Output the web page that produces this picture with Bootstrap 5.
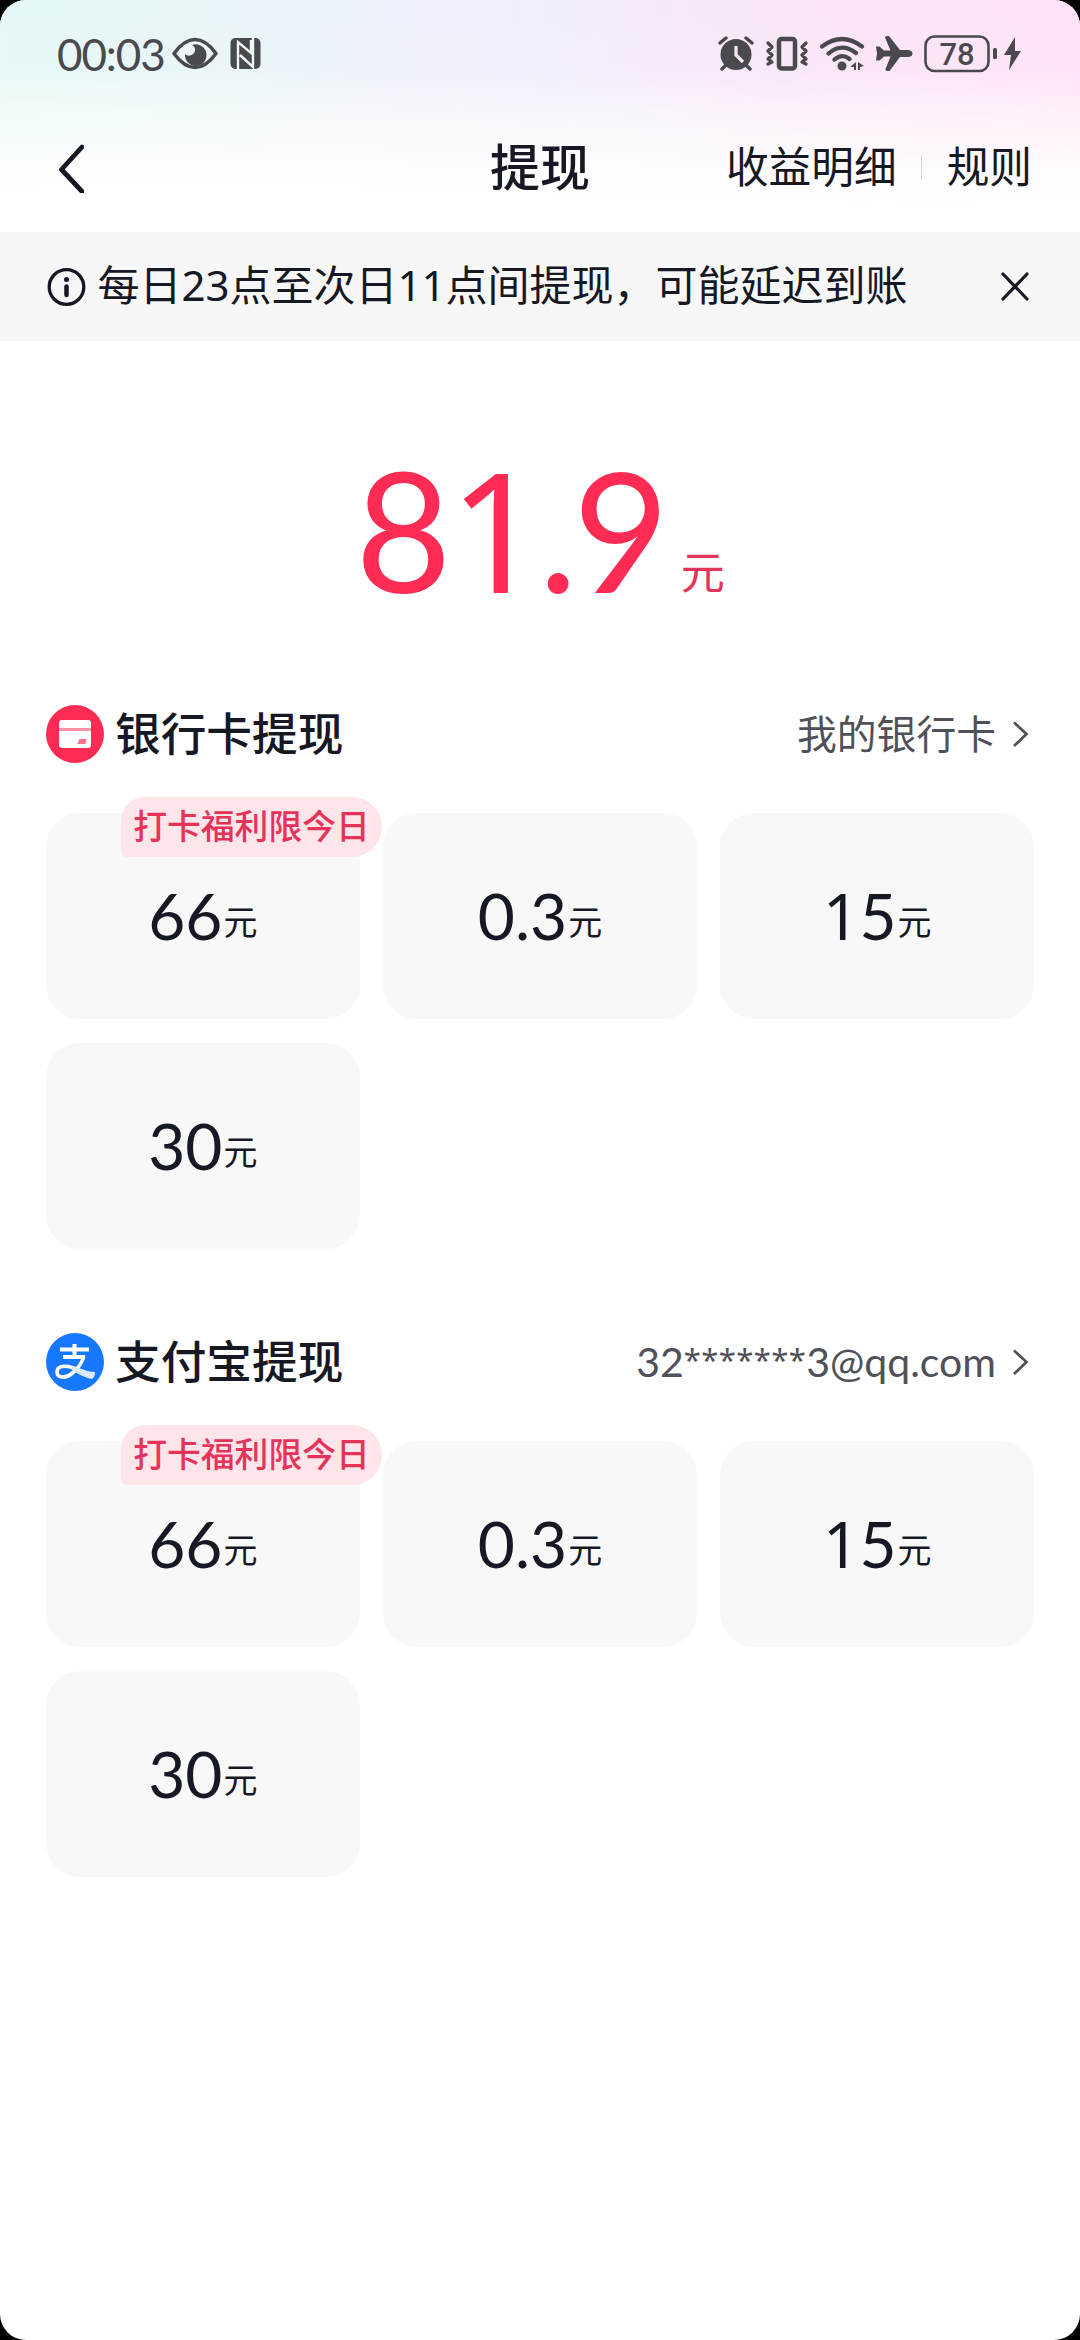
<!DOCTYPE html>
<html lang="zh-CN">
<head>
<meta charset="utf-8">
<meta name="viewport" content="width=device-width, initial-scale=1">
<title>提现</title>
<link href="https://cdn.jsdelivr.net/npm/bootstrap@5.3.0/dist/css/bootstrap.min.css" rel="stylesheet">
<style>
body{background:#000;font-family:Lato,"Noto Sans CJK SC",sans-serif;color:#161823;line-height:1}
svg{display:block;flex:none}
.screen{height:2340px;border-radius:26px;background:#fff}
.top-zone{height:232px;background:linear-gradient(180deg,rgba(255,255,255,0) 0,rgba(255,255,255,.08) 70px,rgba(255,255,255,.5) 115px,rgba(255,255,255,.88) 170px,#fff 220px),linear-gradient(90deg,#e5f8f7 0,#e9f5f8 22%,#f1eefa 48%,#f9e6f8 72%,#ffe1f6 100%)}
.status-bar{height:108px;padding:0 57px;color:#4a4a4e}
.clock{font-size:44px;letter-spacing:-1.1px;width:115px;white-space:nowrap}
.nfc{margin-left:12px}
.title-bar{height:122px;padding:0 48px 3px 48px}
.side{flex:1 1 0}
.back-icon{margin-left:10px}
.page-title{font-size:50px;font-weight:500;padding-bottom:2px}
.nav-text{font-size:42.7px}
.divider{width:1px;height:24px;margin:0 25px 0 24px;background:#d5d0d6}
.notice{height:109px;padding:0 50px 0 46.5px;background:linear-gradient(180deg,#f5f6f7,#f7f7f8 50%)}
.notice-text{font-family:"Noto Sans","Noto Sans CJK SC",sans-serif;font-size:42px;margin-left:12px;padding-bottom:3px;white-space:nowrap}
.amount{height:339px;color:#fe2c55;padding-top:105px}
.amount-num{font-size:166px;line-height:166px;letter-spacing:-4.5px}
.amount-unit{font-size:44px;color:#e33459;margin-left:16px;vertical-align:4px}
.plain-one{font-family:"Noto Sans",sans-serif;line-height:1}
.amount-num .plain-one{margin:0 -1px 0 2px}
.pay-section{padding:0 46px;margin-bottom:59px}
.pay-head{height:108px;margin-bottom:25px}
.pay-title{font-size:45.7px;font-weight:500;margin-left:11px}
.pay-link{font-size:39.8px;color:#505158}
.pay-link svg{margin:0 4px 0 16px}
.mail{font-size:41px;padding-bottom:2px}
.masked{font-family:"Noto Sans",sans-serif;font-size:31px;line-height:1;letter-spacing:.4px;vertical-align:6px}
.amount-grid{--bs-gutter-x:23.5px;--bs-gutter-y:24px}
.tile{height:206px;border-radius:34px;background:#f8f8f8}
.tile-num{font-size:64px}
.tile-unit{font-size:34px;margin-left:1px;vertical-align:5px}
.promo{position:absolute;left:75px;top:-16px;width:261px;height:60px;border-radius:24px 30px 30px 6px;background:#fee5ea;color:#e63359;font-size:33.8px;font-weight:500;white-space:nowrap;z-index:1}
</style>
<script src="https://cdn.jsdelivr.net/npm/bootstrap@5.3.0/dist/js/bootstrap.bundle.min.js"></script>
</head>
<body>
<div class="screen overflow-hidden">
  <header class="top-zone">
    <div class="status-bar d-flex align-items-center">
      <span class="clock">00:03</span>
      <svg width="46" height="36" viewBox="172 36 46 36"><path d="M174 53.500Q184 39.500 195 39.500T216 53.500Q206 67.500 195 67.500T174 53.500Z" fill="none" stroke="currentColor" stroke-width="3.500" stroke-linejoin="round"/><path d="M192 45a10.800 10.800 0 1 1-7 9c3 3.500 10 1 10-4 0-2.500-1-4-3-5z" fill="currentColor"/></svg>
      <svg class="nfc" width="32" height="36" viewBox="230 36 32 36"><rect x="230.500" y="38" width="30" height="31" rx="5" fill="currentColor"/><path d="M238 69V42l13 11V40M240 55l13 12V38" fill="none" stroke="#edf8f9" stroke-width="2.400"/></svg>
      <div class="d-flex align-items-center ms-auto">
        <svg width="38" height="36" viewBox="718 36 38 36"><circle cx="736" cy="54.500" r="15.500" fill="currentColor"/><path d="M720 43l6-5M746 38l6 5M726 65l-4 4M746 65l4 4" fill="none" stroke="currentColor" stroke-width="3.500" stroke-linecap="round"/><path d="M736 46v9l7 7" fill="none" stroke="#f8e8f8" stroke-width="3.200"/></svg>
        <svg style="margin-left:9px" width="44" height="36" viewBox="765 36 44 36"><rect x="779" y="39" width="16" height="29.500" rx="2.500" fill="none" stroke="currentColor" stroke-width="4.500"/><path d="M768 43l4 4-4 4 4 4-4 4 4 3-4 2M806 43l-4 4 4 4-4 4 4 4-4 3 4 2" fill="none" stroke="currentColor" stroke-width="3.300" stroke-linejoin="round" stroke-linecap="round"/></svg>
        <svg style="margin-left:10px" width="46" height="36" viewBox="819 36 46 36"><g fill="none" stroke="currentColor" stroke-width="4.200" stroke-linecap="round"><path d="M822 46.500Q842 31.500 862 46.500M828.500 53.500Q842 42 856 53M834.500 59.500Q842 53 849.500 59"/></g><circle cx="842" cy="66" r="4.500" fill="currentColor"/><path d="M856 62v8h-2v-3h-4zM858 62l6 4-4 1v3h-2z" fill="currentColor"/></svg>
        <svg style="margin-left:10px" width="38" height="36" viewBox="875 36 38 36"><path d="M876 46.500h3.500l4.500 4h6.500L885 37.500q0-1.500 2-1.500h2l11 14h8.500q4 .5 4 3.500t-4 3.500H900L889.500 71H887q-2-.500-1.500-2l5-12.500H884l-4.500 4H876l1-7z" fill="currentColor"/></svg>
        <svg style="margin-left:11px" width="76" height="38" viewBox="924 35 76 38"><rect x="925.500" y="36.500" width="63" height="34.500" rx="9" fill="none" stroke="currentColor" stroke-width="2.600"/><rect x="993" y="48" width="4" height="11" rx="1.500" fill="currentColor"/><text x="957" y="64.500" text-anchor="middle" font-family="Roboto" font-weight="500" font-size="31" fill="currentColor">78</text></svg>
        <svg style="margin-left:3px" width="20" height="36" viewBox="1003 36 20 36"><path d="M1015 37l-11 18h7l-2 15 12-19h-6z" fill="currentColor"/></svg>
      </div>
    </div>
    <nav class="title-bar d-flex align-items-center">
      <div class="side"><svg class="back-icon" width="26" height="50" viewBox="58 143 26 50"><path d="M82 147L61.500 169.500 82 191.500" fill="none" stroke="#161823" stroke-width="4.800" stroke-linecap="round" stroke-linejoin="round"/></svg></div>
      <span class="page-title">提现</span>
      <div class="side d-flex justify-content-end align-items-center nav-text"><span>收益明细</span><span class="divider"></span><span>规则</span></div>
    </nav>
  </header>
  <div class="notice d-flex align-items-center">
    <svg width="39" height="38" viewBox="44 267 39 38"><circle cx="63.500" cy="286" r="17.300" fill="none" stroke="#161823" stroke-width="3.300"/><circle cx="63.500" cy="278.500" r="2.500" fill="#161823"/><path d="M63.500 285.500v8.500" stroke="#161823" stroke-width="4.500" stroke-linecap="round"/></svg>
    <span class="notice-text">每日23点至次日11点间提现，可能延迟到账</span>
    <svg class="ms-auto" width="30" height="30" viewBox="984 271 30 30"><path d="M987 273l24 25M1011 273l-24 25" stroke="#161823" stroke-width="3.200" stroke-linecap="round"/></svg>
  </div>
  <main>
    <div class="amount text-center text-nowrap"><span class="amount-num">8<span class="plain-one">1</span>.9</span><span class="amount-unit">元</span></div>
    <section class="pay-section">
      <div class="pay-head d-flex align-items-center">
        <svg width="58" height="58" viewBox="46 706 58 58"><circle cx="75" cy="735" r="29" fill="#fe2c55"/><path d="M59 729v-5q0-3 3-3h26q3 0 3 3v5zM59 732h32v14q0 3-3 3H62q-3 0-3-3z" fill="#fff"/><path d="M59 729h32v3H59z" fill="#ff93a8"/><path d="M79.500 740H86.500l-1 5H77.500z" fill="#ff6f8b"/></svg>
        <span class="pay-title">银行卡提现</span>
        <div class="pay-link d-flex align-items-center ms-auto"><span>我的银行卡</span><svg width="18" height="28" viewBox="1012 721 18 28"><path d="M1014 723.500l12.500 11.500-12.500 12" fill="none" stroke="#505158" stroke-width="2.700"/></svg></div>
      </div>
      <div class="row row-cols-3 amount-grid">
        <div class="col"><div class="tile position-relative d-flex justify-content-center align-items-center"><span class="promo d-flex align-items-center justify-content-center">打卡福利限今日</span><div><span class="tile-num">66</span><span class="tile-unit">元</span></div></div></div>
        <div class="col"><div class="tile d-flex justify-content-center align-items-center"><div><span class="tile-num">0.3</span><span class="tile-unit">元</span></div></div></div>
        <div class="col"><div class="tile d-flex justify-content-center align-items-center"><div><span class="tile-num"><span class="plain-one">1</span>5</span><span class="tile-unit">元</span></div></div></div>
        <div class="col"><div class="tile d-flex justify-content-center align-items-center"><div><span class="tile-num">30</span><span class="tile-unit">元</span></div></div></div>
      </div>
    </section>
    <section class="pay-section">
      <div class="pay-head d-flex align-items-center">
        <svg width="58" height="58" viewBox="46 1334 58 58"><circle cx="75" cy="1363" r="29" fill="#1677ff"/><path d="M60 1350.500h29M63 1358h22M74.500 1345v13" fill="none" stroke="#fff" stroke-width="4"/><path d="M84 1357.500q-3.500 10-12 17c-6 5-15 5-15-1.500 0-6 8-7 15-4.500l22 8" fill="none" stroke="#fff" stroke-width="3.600" stroke-linejoin="round"/><path d="M72 1367.500q12 5 23 5.500 0 5-3 7-10-2-20-9z" fill="#dceaff"/></svg>
        <span class="pay-title">支付宝提现</span>
        <div class="pay-link d-flex align-items-center ms-auto"><span class="mail">32<span class="masked">*******</span>3@qq.com</span><svg width="18" height="28" viewBox="1012 721 18 28"><path d="M1014 723.500l12.500 11.500-12.500 12" fill="none" stroke="#505158" stroke-width="2.700"/></svg></div>
      </div>
      <div class="row row-cols-3 amount-grid">
        <div class="col"><div class="tile position-relative d-flex justify-content-center align-items-center"><span class="promo d-flex align-items-center justify-content-center">打卡福利限今日</span><div><span class="tile-num">66</span><span class="tile-unit">元</span></div></div></div>
        <div class="col"><div class="tile d-flex justify-content-center align-items-center"><div><span class="tile-num">0.3</span><span class="tile-unit">元</span></div></div></div>
        <div class="col"><div class="tile d-flex justify-content-center align-items-center"><div><span class="tile-num"><span class="plain-one">1</span>5</span><span class="tile-unit">元</span></div></div></div>
        <div class="col"><div class="tile d-flex justify-content-center align-items-center"><div><span class="tile-num">30</span><span class="tile-unit">元</span></div></div></div>
      </div>
    </section>
  </main>
</div>
</body>
</html>
